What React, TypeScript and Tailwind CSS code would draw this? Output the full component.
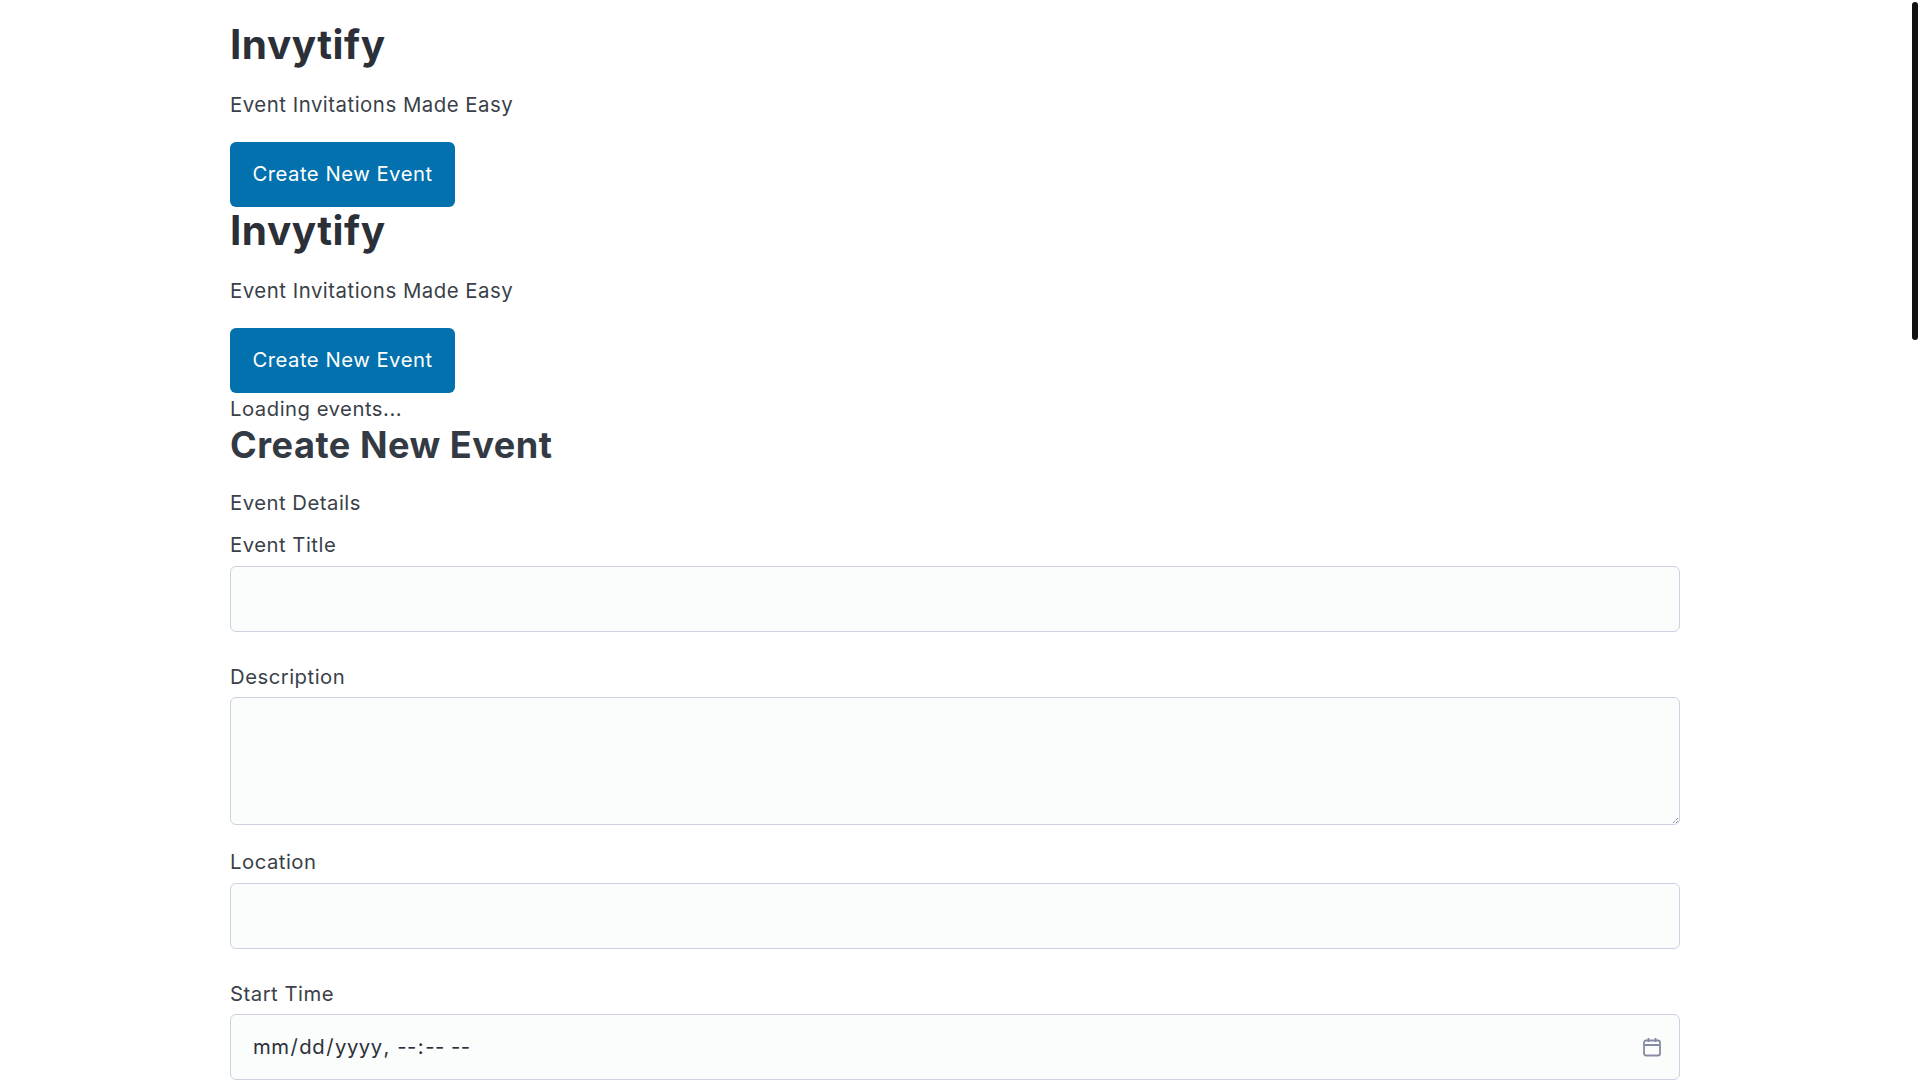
const font = "font-['Inter','Liberation_Sans',sans-serif] tracking-[0.5px]";

function Header({ first }: { first?: boolean }) {
  return (
    <header className={first ? "pt-[22px]" : "pt-px"}>
      <h1 className="text-[40.5px] leading-[46px] font-bold text-[#2b3038]">Invytify</h1>
      <p className="mt-[22px] text-[20.4px] leading-[30px] text-[#3a3f4a]">Event Invitations Made Easy</p>
      <button className="mt-[22px] block w-[225px] h-[65px] rounded-[6px] bg-[#0271ae] text-white text-[20.3px] tracking-[0.5px]">Create New Event</button>
    </header>
  );
}

const labelCls = "block text-[20.3px] leading-[30px]";
const fieldCls = "block w-full h-[66px] rounded-[6px] border border-[#cdd1e2] bg-[#fbfcfc] px-[21px] text-[20.3px] tracking-[0.5px] text-[#2b3038] outline-none";

export default function App() {
  return (
    <div className={`relative h-screen overflow-hidden bg-white ${font}`}>
      <main className="w-[1450px] text-[#3a3f4a] ml-[230px]">
        <Header first />
        <Header />
        <p className="mt-px text-[20.3px] leading-[30px]">Loading events...</p>
        <h2 className="mt-px text-[36.15px] leading-[40px] font-bold text-[#343a44]">Create New Event</h2>
        <form>
          <p className="mt-[23px] text-[20.3px] leading-[30px]">Event Details</p>
          <label className={`mt-[12px] mb-[6px] ${labelCls}`}>Event Title</label>
          <input className={fieldCls} />
          <label className={`mt-[30px] mb-[5px] ${labelCls}`}>Description</label>
          <div className="relative">
            <textarea className={`${fieldCls} !h-[128px] resize-none`} />
            <svg className="absolute right-[1px] bottom-[1px] pointer-events-none" width="7" height="7" viewBox="0 0 7 7" fill="none" stroke="#555a66" strokeWidth="1" strokeDasharray="1 1">
              <path d="M1 6 6 1M4 6 6 4" />
            </svg>
          </div>
          <label className={`mt-[22px] mb-[6px] ${labelCls}`}>Location</label>
          <input className={fieldCls} />
          <label className={`mt-[30px] mb-[5px] ${labelCls}`}>Start Time</label>
          <div className="relative">
            <input type="datetime-local" className={`${fieldCls} [&::-webkit-calendar-picker-indicator]:opacity-0`} />
            <svg className="absolute right-[18px] top-[23px] pointer-events-none" width="20" height="20" viewBox="0 0 20 20" fill="none" stroke="#858ca3" strokeWidth="1.8">
              <rect x="2" y="3.5" width="16" height="15" rx="2" />
              <path d="M2 8h16M6.5 1v4M13.5 1v4" />
            </svg>
          </div>
        </form>
      </main>
      <div className="absolute right-[2px] top-[2px] w-[6px] h-[338px] rounded-full bg-[#111111]" />
    </div>
  );
}
